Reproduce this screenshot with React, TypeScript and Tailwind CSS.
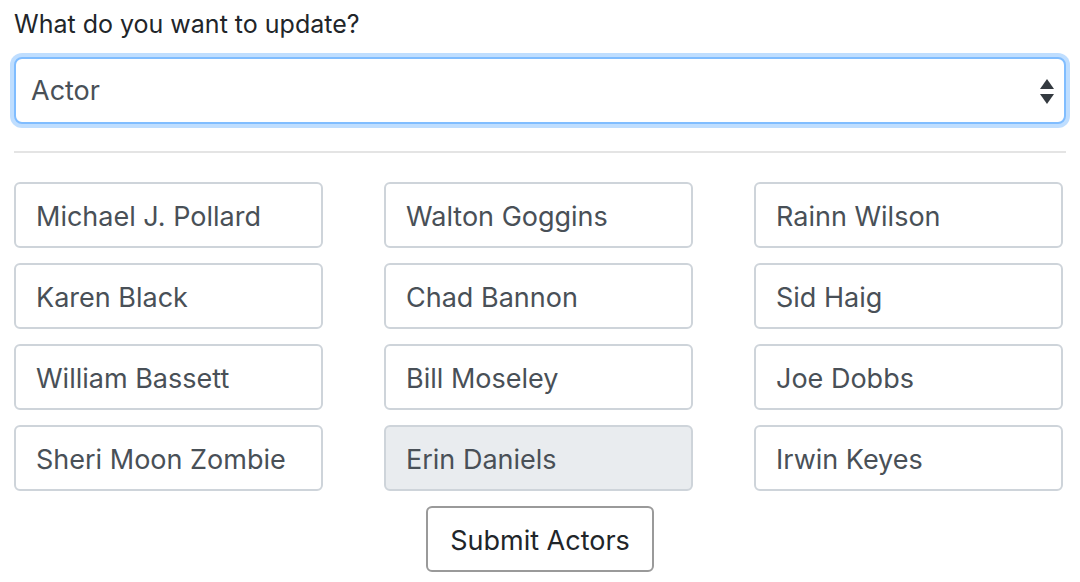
import React from "react";

const names = [
  "Michael J. Pollard",
  "Walton Goggins",
  "Rainn Wilson",
  "Karen Black",
  "Chad Bannon",
  "Sid Haig",
  "William Bassett",
  "Bill Moseley",
  "Joe Dobbs",
  "Sheri Moon Zombie",
  "Erin Daniels",
  "Irwin Keyes",
];

export default function App() {
  return (
    <div
      className="w-[1080px] h-[582px] bg-white overflow-hidden pl-[14px] pr-[14px]"
      style={{ fontFamily: 'Inter, "Liberation Sans", Arial, sans-serif' }}
    >
      <div className="pt-[7px] text-[25px] leading-[34px] text-[#212529]">What do you want to update?</div>
      <div className="mt-[16px] relative h-[67px] rounded-[8px] border-2 border-[#80bdff] shadow-[0_0_0_4px_rgba(0,123,255,0.25)] bg-white flex items-center pl-[15px] pt-[2px]">
        <span className="text-[27px] text-[#495057]">Actor</span>
        <svg className="absolute right-[10px] top-[20px]" width="14" height="26" viewBox="0 0 14 26">
          <polygon points="7,0 14,10 0,10" fill="#343a40" />
          <polygon points="0,15 14,15 7,25" fill="#343a40" />
        </svg>
      </div>
      <div className="mt-[27px] h-[2px] bg-[#e4e4e4]" />
      <div className="mt-[29px] grid grid-cols-[309px_309px_309px] gap-x-[61px] gap-y-[15px]">
        {names.map((n) => (
          <div
            key={n}
            className={
              n === "Erin Daniels"
                ? "h-[66px] rounded-[6px] border-2 border-[#ced4da] bg-[#e9ecef] flex items-center pl-[20px] pt-[4px] text-[27px] text-[#495057]"
                : "h-[66px] rounded-[6px] border-2 border-[#ced4da] bg-white flex items-center pl-[20px] pt-[4px] text-[27px] text-[#495057]"
            }
          >
            {n}
          </div>
        ))}
      </div>
      <div className="mt-[15px] flex justify-center">
        <button className="h-[66px] w-[228px] rounded-[6px] border-2 border-[#9a9a9a] bg-white pt-[4px] text-[27px] text-[#212529]">
          Submit Actors
        </button>
      </div>
    </div>
  );
}
